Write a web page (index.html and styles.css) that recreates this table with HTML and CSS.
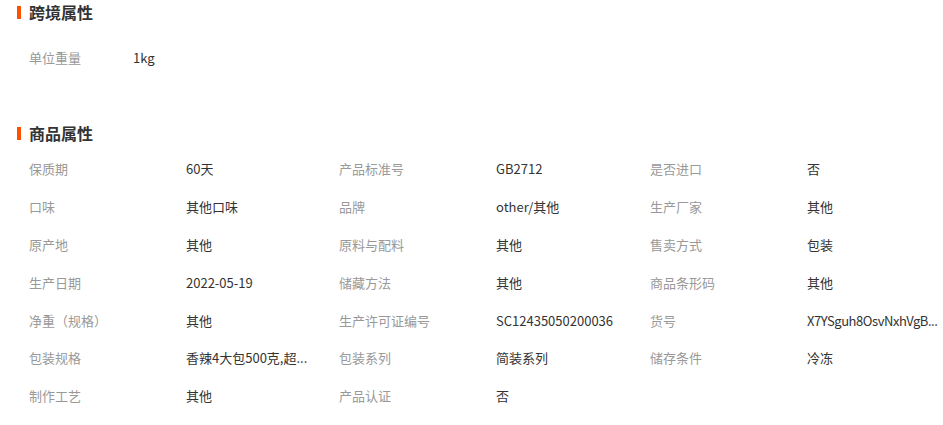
FILE: index.html
```html
<!DOCTYPE html>
<html lang="zh-CN">
<head>
  <meta charset="UTF-8">
  <meta name="viewport" content="width=device-width, initial-scale=1.0">
  <title>商品属性</title>
  <link rel="stylesheet" href="styles.css">
</head>
<body>
  <div class="attrs">
    <!-- 跨境属性 -->
    <div class="section section-cross">
      <h3 class="section-title">跨境属性</h3>
      <div class="cross-row">
        <span class="cross-label">单位重量</span>
        <span class="cross-value">1kg</span>
      </div>
    </div>

    <!-- 商品属性 -->
    <div class="section section-goods">
      <h3 class="section-title">商品属性</h3>
      <div class="attr-grid">
        <div class="attr-item"><span class="attr-label">保质期</span><span class="attr-value">60天</span></div>
        <div class="attr-item"><span class="attr-label">产品标准号</span><span class="attr-value">GB2712</span></div>
        <div class="attr-item"><span class="attr-label">是否进口</span><span class="attr-value">否</span></div>

        <div class="attr-item"><span class="attr-label">口味</span><span class="attr-value">其他口味</span></div>
        <div class="attr-item"><span class="attr-label">品牌</span><span class="attr-value">other/其他</span></div>
        <div class="attr-item"><span class="attr-label">生产厂家</span><span class="attr-value">其他</span></div>

        <div class="attr-item"><span class="attr-label">原产地</span><span class="attr-value">其他</span></div>
        <div class="attr-item"><span class="attr-label">原料与配料</span><span class="attr-value">其他</span></div>
        <div class="attr-item"><span class="attr-label">售卖方式</span><span class="attr-value">包装</span></div>

        <div class="attr-item"><span class="attr-label">生产日期</span><span class="attr-value">2022-05-19</span></div>
        <div class="attr-item"><span class="attr-label">储藏方法</span><span class="attr-value">其他</span></div>
        <div class="attr-item"><span class="attr-label">商品条形码</span><span class="attr-value">其他</span></div>

        <div class="attr-item"><span class="attr-label">净重（规格）</span><span class="attr-value">其他</span></div>
        <div class="attr-item"><span class="attr-label">生产许可证编号</span><span class="attr-value">SC12435050200036</span></div>
        <div class="attr-item"><span class="attr-label">货号</span><span class="attr-value attr-value-code">X7YSguh8OsvNxhVgB...</span></div>

        <div class="attr-item"><span class="attr-label">包装规格</span><span class="attr-value">香辣4大包500克,超...</span></div>
        <div class="attr-item"><span class="attr-label">包装系列</span><span class="attr-value">简装系列</span></div>
        <div class="attr-item"><span class="attr-label">储存条件</span><span class="attr-value">冷冻</span></div>

        <div class="attr-item"><span class="attr-label">制作工艺</span><span class="attr-value">其他</span></div>
        <div class="attr-item"><span class="attr-label">产品认证</span><span class="attr-value">否</span></div>
      </div>
    </div>
  </div>
</body>
</html>
```

FILE: styles.css
```css
/* Reset */
* {
  margin: 0;
  padding: 0;
  box-sizing: border-box;
}
body {
  font-family: "Microsoft YaHei", "Noto Sans CJK SC", "Noto Sans", sans-serif;
  font-size: 13px;
  color: #333;
  background: #fff;
  overflow: hidden;
}

.attrs {
  padding-left: 17px;
}

/* Section title */
.section-title {
  display: flex;
  align-items: center;
  height: 24px;
  font-size: 16px;
  font-weight: bold;
  color: #333;
}
.section-title::before {
  content: "";
  width: 4px;
  height: 13px;
  margin-right: 8px;
  background: #ff5000;
}

/* Cross border */
.section-cross {
  margin-bottom: 45px;
}
.cross-row {
  display: flex;
  align-items: center;
  height: 38px;
  margin-top: 14px;
  padding-left: 12px;
}
.cross-label {
  width: 104px;
  color: #999;
}

/* Goods attributes */
.attr-grid {
  display: grid;
  grid-template-columns: 310px 311px 1fr;
  grid-auto-rows: 37.8px;
  margin-top: 5px;
  padding-left: 12px;
}
.attr-item {
  display: flex;
  align-items: center;
  white-space: nowrap;
}
.attr-label {
  width: 157px;
  flex-shrink: 0;
  color: #999;
}
.attr-value {
  color: #333;
}
.attr-value-code {
  letter-spacing: -0.45px;
}
```
